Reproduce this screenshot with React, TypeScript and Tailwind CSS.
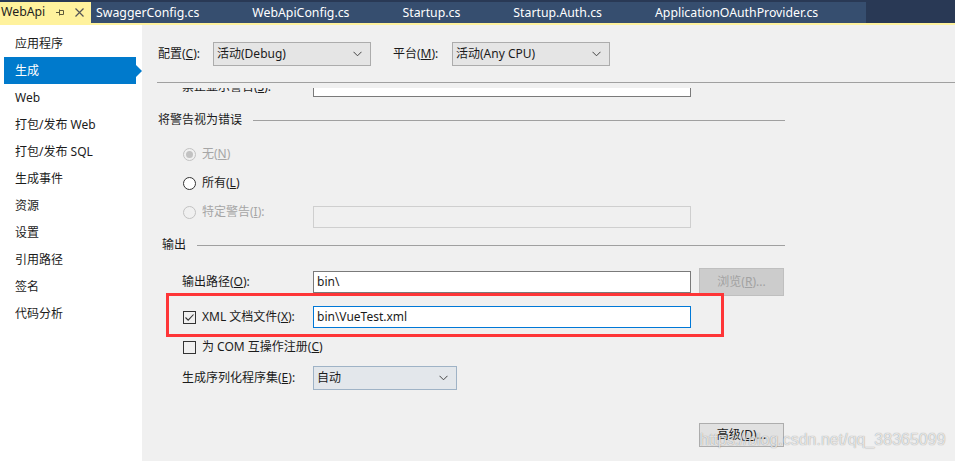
import React from 'react';

const navItems = [
  '应用程序',
  '生成',
  'Web',
  '打包/发布 Web',
  '打包/发布 SQL',
  '生成事件',
  '资源',
  '设置',
  '引用路径',
  '签名',
  '代码分析',
];

const tabs = ['SwaggerConfig.cs', 'WebApiConfig.cs', 'Startup.cs', 'Startup.Auth.cs', 'ApplicationOAuthProvider.cs'];

const Chevron = () => (
  <svg width="9" height="6" viewBox="0 0 9 6">
    <path d="M0.5 0.8 L4.5 4.8 L8.5 0.8" fill="none" stroke="#444" strokeWidth="1" />
  </svg>
);

const ComboBox = ({ value, width, tinted }: { value: string; width: string; tinted?: boolean }) => (
  <div
    className={`${width} h-[24px] flex items-center justify-between pl-[3px] pr-[8px] border ${
      tinted ? 'bg-[#e3e7eb] border-[#9fb3c6]' : 'bg-[#e5e5e5] border-[#acacac]'
    }`}
  >
    <span>{value}</span>
    <Chevron />
  </div>
);

const Radio = ({ checked, disabled }: { checked?: boolean; disabled?: boolean }) => (
  <span
    className={`w-[13px] h-[13px] rounded-full border flex items-center justify-center shrink-0 ${
      disabled ? 'border-[#c2c2c2]' : 'border-[#333] bg-white'
    }`}
  >
    {checked && <span className={`w-[7px] h-[7px] rounded-full ${disabled ? 'bg-[#c2c2c2]' : 'bg-[#333]'}`} />}
  </span>
);

const CheckBox = ({ checked }: { checked?: boolean }) => (
  <span className="w-[13px] h-[13px] border border-[#333] flex items-center justify-center shrink-0">
    {checked && (
      <svg width="11" height="11" viewBox="0 0 11 11">
        <path d="M1.5 5.5 L4.2 8.2 L9.5 2.5" fill="none" stroke="#333" strokeWidth="1.1" />
      </svg>
    )}
  </span>
);

const GroupHeader = ({ title, indent }: { title: string; indent: string }) => (
  <div className={`h-[20px] w-[628px] flex items-center ${indent}`}>
    <span>{title}</span>
    <div className="flex-1 h-px bg-[#a0a0a0] ml-[11px]" />
  </div>
);

export default function App() {
  return (
    <div className="relative w-[955px] h-[461px] overflow-hidden flex flex-col font-['Noto_Sans','Noto_Sans_CJK_SC',sans-serif] text-[12px] text-[#1b1b1b] bg-[#f0f0f0]">
      {/* document tabs */}
      <div className="h-[23px] pt-[2px] bg-[#293955] flex shrink-0 text-[12.3px]">
        <div className="w-[91px] h-[21px] bg-[#fff29d] flex items-center text-[#1e1e1e]">
          <span className="pl-[1px]">WebApi</span>
          <svg className="ml-[11px]" width="9" height="9" viewBox="0 0 9 9">
            <path d="M0 4.5 H3 M3.5 1.5 V7.5 M3.5 2.5 H7.5 V6.5 H3.5" fill="none" stroke="#5e5a3a" strokeWidth="1" />
          </svg>
          <svg className="ml-[10px]" width="9" height="9" viewBox="0 0 9 9">
            <path d="M0.5 0.5 L8.5 8.5 M8.5 0.5 L0.5 8.5" fill="none" stroke="#555" strokeWidth="1.2" />
          </svg>
        </div>
        {tabs.map((t) => (
          <div key={t} className="h-[21px] bg-[#364e6f] text-white flex items-center pl-[5px] pr-[48px] pt-[1px]">
            {t}
          </div>
        ))}
      </div>
      <div className="h-[2px] bg-[#fff29d] shrink-0" />

      <div className="flex flex-1 min-h-0">
        {/* sidebar */}
        <div className="w-[142px] bg-white pt-[5px] pl-[4px] shrink-0">
          {navItems.map((item) =>
            item === '生成' ? (
              <div key={item} className="flex items-center">
                <div className="w-[132px] h-[27px] bg-[#007acc] text-white flex items-center pl-[11px]">{item}</div>
                <div className="w-0 h-0 border-y-[6px] border-y-transparent border-l-[6px] border-l-[#007acc]" />
              </div>
            ) : (
              <div key={item} className="h-[27px] flex items-center pl-[11px]">
                {item}
              </div>
            )
          )}
        </div>

        {/* properties page */}
        <div className="flex-1 flex flex-col min-w-0">
          <div className="h-[57px] flex items-center pl-[16px] shrink-0">
            <span className="w-[55px]">
              配置(<u>C</u>):
            </span>
            <ComboBox value="活动(Debug)" width="w-[158px]" />
            <span className="w-[59px] ml-[22px]">
              平台(<u>M</u>):
            </span>
            <ComboBox value="活动(Any CPU)" width="w-[158px]" />
          </div>
          <div className="h-px bg-[#a0a0a0] ml-[15px] mb-[5px] shrink-0" />

          {/* scrolled settings area */}
          <div className="flex-1 overflow-hidden pl-[15px]">
            <div className="-mt-[13px] flex flex-col">
              <div className="h-[22px] flex items-center">
                <span className="w-[156px] pl-[25px] mt-[2px]">
                  禁止显示警告(<u>S</u>):
                </span>
                <div className="w-[378px] h-[22px] bg-white border border-[#7a7a7a]" />
              </div>

              <div className="mt-[13px]">
                <GroupHeader title="将警告视为错误" indent="pl-[1px]" />
              </div>

              <div className="mt-[13px] h-[22px] flex items-center pl-[26px] gap-[6px] text-[#a6a6a6]">
                <Radio checked disabled />
                <span>
                  无(<u>N</u>)
                </span>
              </div>
              <div className="mt-[7px] h-[22px] flex items-center pl-[26px] gap-[6px]">
                <Radio />
                <span>
                  所有(<u>L</u>)
                </span>
              </div>
              <div className="mt-[12px] h-[22px] flex items-start">
                <div className="w-[156px] h-[16px] -mt-[2px] flex items-center pl-[26px] gap-[6px] text-[#a6a6a6]">
                  <Radio disabled />
                  <span>
                    特定警告(<u>I</u>):
                  </span>
                </div>
                <div className="w-[378px] h-[22px] bg-[#f0f0f0] border border-[#cfcfcf]" />
              </div>

              <div className="mt-[7px]">
                <GroupHeader title="输出" indent="pl-[5px]" />
              </div>

              <div className="mt-[13px] h-[28px] flex items-center">
                <span className="w-[156px] pl-[25px]">
                  输出路径(<u>O</u>):
                </span>
                <div className="w-[378px] h-[22px] bg-white border border-[#7a7a7a] flex items-center pl-[3px]">bin\</div>
                <div className="ml-[8px] w-[85px] h-[28px] bg-[#cccccc] border border-[#bfbfbf] text-[#a2a2a2] flex items-center justify-center">
                  浏览(<u>R</u>)...
                </div>
              </div>

              <div className="mt-[10px] h-[22px] flex items-center">
                <div className="w-[156px] flex items-center pl-[26px] gap-[6px]">
                  <CheckBox checked />
                  <span>
                    XML 文档文件(<u>X</u>):
                  </span>
                </div>
                <div className="w-[378px] h-[22px] bg-white border border-[#0078d7] flex items-center pl-[3px]">
                  bin\VueTest.xml
                </div>
              </div>

              <div className="mt-[10px] h-[18px] flex items-center pl-[26px] gap-[6px]">
                <CheckBox />
                <span>
                  为 COM 互操作注册(<u>C</u>)
                </span>
              </div>

              <div className="mt-[10px] h-[24px] flex items-center">
                <span className="w-[156px] pl-[25px]">
                  生成序列化程序集(<u>E</u>):
                </span>
                <ComboBox value="自动" width="w-[144px]" tinted />
              </div>

              <div className="mt-[33px] ml-[542px] w-[85px] h-[24px] bg-[#e1e1e1] border border-[#adadad] flex items-center justify-center">
                高级(<u>D</u>)...
              </div>
            </div>
          </div>
        </div>
      </div>

      {/* annotation overlay */}
      <div className="absolute left-[166px] top-[293px] w-[558px] h-[44px] border-[3px] border-[#fe3537]" />
      <div className="absolute left-[700px] top-[431px] leading-[18px] text-[16px] font-['Liberation_Sans',Arial,sans-serif] text-white/75 [text-shadow:0_0_1px_rgba(0,0,0,0.45)]">
        https://blog.csdn.net/qq_38365099
      </div>
    </div>
  );
}
